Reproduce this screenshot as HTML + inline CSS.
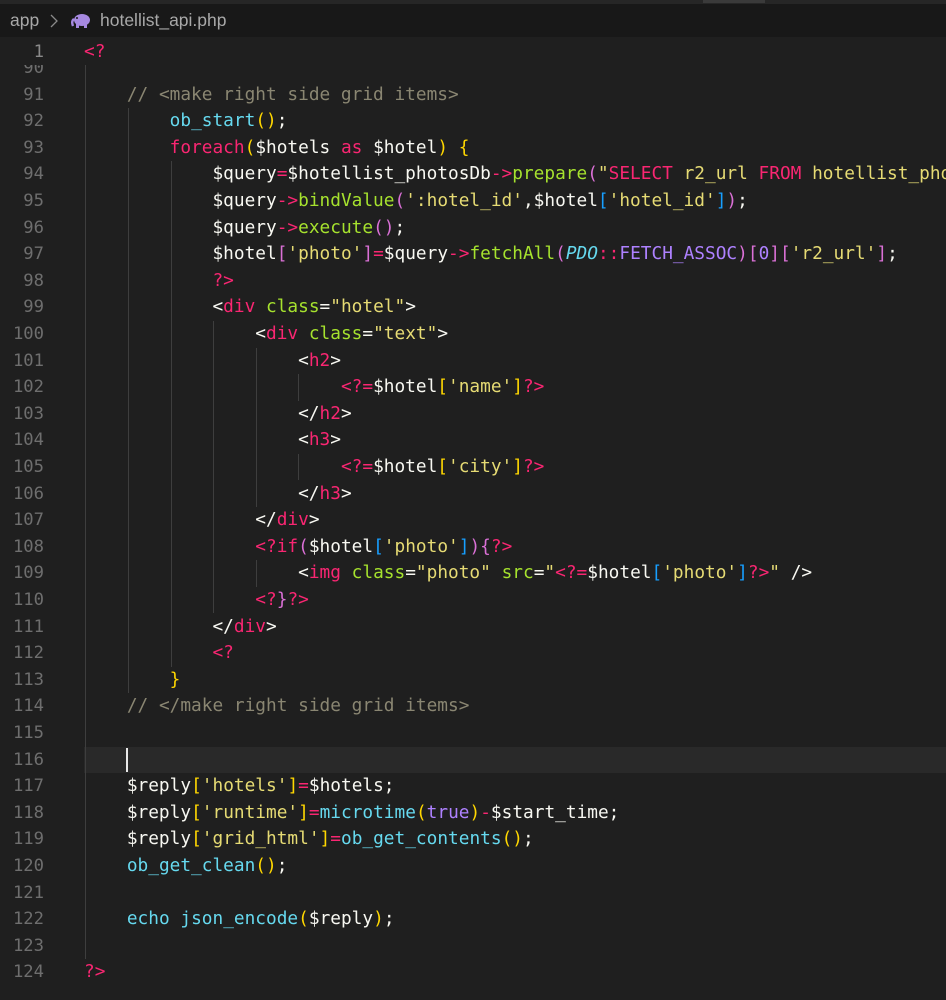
<!DOCTYPE html>
<html><head><meta charset="utf-8"><style>
html,body{margin:0;padding:0;width:946px;height:1000px;overflow:hidden;background:#1f1f1f;}
.top{position:absolute;left:0;top:0;width:946px;height:4px;background:#262626;}
.top i{position:absolute;left:703px;top:0;width:62px;height:3px;background:#3a3a3a;}
.bc{position:absolute;left:0;top:4px;width:946px;height:33px;background:#181818;font-family:"Liberation Sans",sans-serif;font-size:17.5px;color:#a8a8a8;}
.bc span{position:absolute;top:6px;}
.ed{position:absolute;left:0;top:37px;width:946px;height:963px;overflow:hidden;}
.ln{position:absolute;left:0;width:44px;text-align:right;font-family:"DejaVu Sans Mono",monospace;font-size:17.2px;color:#6e6e6e;height:26.6px;line-height:26.6px;}
.cd{position:absolute;left:84px;white-space:pre;font-family:"DejaVu Sans Mono",monospace;font-size:17.8px;color:#f8f8f2;height:26.6px;line-height:26.6px;}
.g{position:absolute;width:1px;background:#3e3e3e;}
.pk{color:#f92672}.gr{color:#a6e22e}.cy{color:#66d9ef}.yl{color:#e6db74}.cm{color:#8a8672}.b1{color:#ffd700}.b2{color:#da70d6}.b3{color:#179fff}.pu{color:#ae81ff}.it{font-style:italic}
</style></head><body>
<div class="top"><i></i></div>
<div class="bc"><span style="left:10px">app</span>
<svg style="position:absolute;left:49px;top:10px" width="10" height="14" viewBox="0 0 10 14"><path d="M2 1 L8 7 L2 13" fill="none" stroke="#8a8a8a" stroke-width="1.3"/></svg>
<svg style="position:absolute;left:71px;top:9px" width="22" height="16" viewBox="0 0 22 16"><ellipse cx="11" cy="7" rx="8" ry="6" fill="#a689e0"/><rect x="5" y="9" width="3" height="6" fill="#a689e0"/><rect x="13" y="9" width="3" height="6" fill="#a689e0"/><path d="M3 6 Q0 8 2 13" stroke="#a689e0" stroke-width="2.4" fill="none"/><circle cx="6" cy="5" r="1" fill="#181818"/></svg>
<span style="left:100px">hotellist_api.php</span></div>
<div class="ed" id="ed"></div>
<script>
(function(){
var P='<span class="pk">',G='<span class="gr">',C='<span class="cy">',Y='<span class="yl">',M='<span class="cm">',B1='<span class="b1">',B2='<span class="b2">',B3='<span class="b3">',U='<span class="pu">',E='</span>';
var L={
91:`    ${M}// &lt;make right side grid items&gt;${E}`,
92:`        ${C}ob_start${E}${B1}()${E};`,
93:`        ${P}foreach${E}${B1}(${E}$hotels ${P}as${E} $hotel${B1}) {${E}`,
94:`            $query${P}=${E}$hotellist_photosDb${P}-&gt;${E}${G}prepare${E}${B2}(${E}${Y}"${E}${P}SELECT${E} ${Y}r2_url${E} ${P}FROM${E} ${Y}hotellist_photos WHERE hotel_id=:hotel_id"${E}`,
95:`            $query${P}-&gt;${E}${G}bindValue${E}${B2}(${E}${Y}':hotel_id'${E},$hotel${B3}[${E}${Y}'hotel_id'${E}${B3}]${E}${B2})${E};`,
96:`            $query${P}-&gt;${E}${G}execute${E}${B2}()${E};`,
97:`            $hotel${B2}[${E}${Y}'photo'${E}${B2}]${E}${P}=${E}$query${P}-&gt;${E}${G}fetchAll${E}${B2}(${E}${C}<i>PDO</i>${E}${P}::${E}${U}FETCH_ASSOC${E}${B2})[${E}${U}0${E}${B2}][${E}${Y}'r2_url'${E}${B2}]${E};`,
98:`            ${P}?&gt;${E}`,
99:`            &lt;${P}div${E} ${G}class${E}=${Y}"hotel"${E}&gt;`,
100:`                &lt;${P}div${E} ${G}class${E}=${Y}"text"${E}&gt;`,
101:`                    &lt;${P}h2${E}&gt;`,
102:`                        ${P}&lt;?=${E}$hotel${B1}[${E}${Y}'name'${E}${B1}]${E}${P}?&gt;${E}`,
103:`                    &lt;/${P}h2${E}&gt;`,
104:`                    &lt;${P}h3${E}&gt;`,
105:`                        ${P}&lt;?=${E}$hotel${B1}[${E}${Y}'city'${E}${B1}]${E}${P}?&gt;${E}`,
106:`                    &lt;/${P}h3${E}&gt;`,
107:`                &lt;/${P}div${E}&gt;`,
108:`                ${P}&lt;?if${E}${B2}(${E}$hotel${B3}[${E}${Y}'photo'${E}${B3}]${E}${B2}){${E}${P}?&gt;${E}`,
109:`                    &lt;${P}img${E} ${G}class${E}=${Y}"photo"${E} ${G}src${E}=${Y}"${E}${P}&lt;?=${E}$hotel${B3}[${E}${Y}'photo'${E}${B3}]${E}${P}?&gt;${E}${Y}"${E} /&gt;`,
110:`                ${P}&lt;?${E}${B2}}${E}${P}?&gt;${E}`,
111:`            &lt;/${P}div${E}&gt;`,
112:`            ${P}&lt;?${E}`,
113:`        ${B1}}${E}`,
114:`    ${M}// &lt;/make right side grid items&gt;${E}`,
117:`    $reply${B1}[${E}${Y}'hotels'${E}${B1}]${E}${P}=${E}$hotels;`,
118:`    $reply${B1}[${E}${Y}'runtime'${E}${B1}]${E}${P}=${E}${C}microtime${E}${B1}(${E}${U}true${E}${B1})${E}${P}-${E}$start_time;`,
119:`    $reply${B1}[${E}${Y}'grid_html'${E}${B1}]${E}${P}=${E}${C}ob_get_contents${E}${B1}()${E};`,
120:`    ${C}ob_get_clean${E}${B1}()${E};`,
122:`    ${C}echo${E} ${C}json_encode${E}${B1}(${E}$reply${B1})${E};`,
124:`${P}?&gt;${E}`
};
var h='';var LH=26.6;
function rowY(n){return (81.5-37)+(n-91)*LH;}
h+=`<div style="position:absolute;left:84px;right:0;top:${rowY(116)}px;height:${LH}px;background:#292929"></div>`;
h+=`<div style="position:absolute;left:126px;top:${rowY(116)+1}px;width:2px;height:${LH-2}px;background:#e8e8e8"></div>`;
var guides=[[85,90,123],[128,92,113],[171,94,112],[213,100,110],[256,101,106],[256,109,109],[298,102,102],[298,105,105]];
guides.forEach(function(g){h+=`<div class="g" style="left:${g[0]}px;top:${rowY(g[1])}px;height:${(g[2]-g[1]+1)*LH}px"></div>`;});
h+=`<div class="ln" style="top:${rowY(90)}px">90</div>`;
for(var n=91;n<=124;n++){h+=`<div class="ln" style="top:${rowY(n)}px">${n}</div>`;if(L[n])h+=`<div class="cd" style="top:${rowY(n)}px">${L[n]}</div>`;}
h+=`<div style="position:absolute;left:0;top:0;width:946px;height:28px;background:#1f1f1f"></div>`;
h+=`<div class="ln" style="top:1.5px;color:#8a8a8a">1</div><div class="cd" style="top:1.5px">${P}&lt;?${E}</div>`;
h+=`<div class="g" style="left:85px;top:28px;height:6px"></div>`;
document.getElementById('ed').innerHTML=h;
})();
</script>
</body></html>
